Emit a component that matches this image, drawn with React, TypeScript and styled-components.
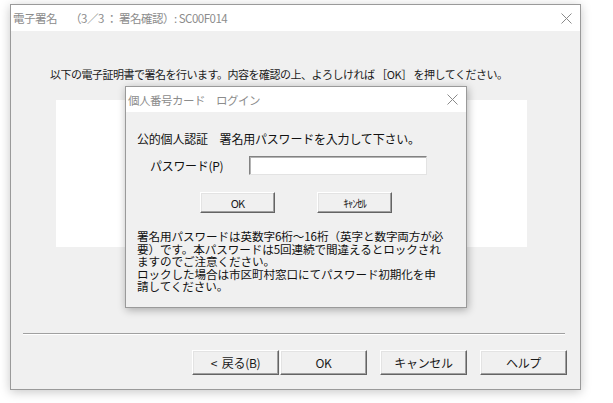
import React from "react";
import styled, { createGlobalStyle } from "styled-components";

const GlobalStyle = createGlobalStyle`
  html, body {
    margin: 0;
    padding: 0;
    background: #ffffff;
  }
  body {
    font-family: "Noto Sans CJK JP", "Noto Sans", sans-serif;
    width: 613px;
    height: 403px;
    overflow: hidden;
  }
`;

const Page = styled.div`
  padding: 4px 0 0 10px;
`;

const Window = styled.div`
  position: relative;
  width: 569px;
  height: 384px;
  border: 1px solid #9a9a9a;
  background: #f0f0f0;
  box-shadow: 0 2px 10px rgba(0, 0, 0, 0.22);
  display: flex;
  flex-direction: column;
`;

const TitleBar = styled.div<{ $h: number }>`
  height: ${(p) => p.$h}px;
  background: #ffffff;
  display: flex;
  align-items: center;
  justify-content: space-between;
  padding: 0 8px 0 2px;
  flex-shrink: 0;
`;

const TitleText = styled.span`
  font-size: 11.5px;
  color: #8c8c8c;
  white-space: pre;
  letter-spacing: -0.5px;
`;

const Body = styled.div`
  flex: 1;
  display: flex;
  flex-direction: column;
  padding: 36px 0 0 0;
`;

const Instruction = styled.div`
  font-size: 11px;
  color: #1a1a1a;
  padding-left: 39px;
  letter-spacing: -0.5px;
  white-space: nowrap;
  line-height: 14px;
`;

const WhitePanel = styled.div`
  margin: 19px 0 0 45px;
  width: 471px;
  height: 147px;
  background: #ffffff;
`;

const Separator = styled.div`
  margin: 86px 15px 0 12px;
  height: 0;
  border-top: 1px solid #a0a0a0;
  border-bottom: 1px solid #ffffff;
`;

const ButtonRow = styled.div`
  display: flex;
  justify-content: flex-end;
  padding: 15px 13px 0 0;
`;

const WinButton = styled.button<{ $w: number; $gap?: number; $size?: number }>`
  width: ${(p) => p.$w}px;
  height: 25px;
  margin-left: ${(p) => p.$gap ?? 0}px;
  background: #f0f0f0;
  border: 1px solid;
  border-color: #ffffff #646464 #646464 #ffffff;
  box-shadow: inset -1px -1px 0 #a0a0a0, inset 1px 1px 0 #e3e3e3;
  font-family: "Noto Sans CJK JP", "Noto Sans", sans-serif;
  font-size: ${(p) => p.$size ?? 12}px;
  color: #1a1a1a;
  padding: 0;
  display: flex;
  align-items: center;
  justify-content: center;
  letter-spacing: -0.3px;
  white-space: pre;
`;

const Dialog = styled.div`
  position: absolute;
  left: 114px;
  top: 81px;
  width: 340px;
  height: 220px;
  border: 1px solid #9a9a9a;
  background: #f0f0f0;
  box-shadow: 1px 2px 8px rgba(0, 0, 0, 0.3);
  display: flex;
  flex-direction: column;
`;

const DialogBody = styled.div`
  display: flex;
  flex-direction: column;
  padding: 20px 0 0 11px;
`;

const Prompt = styled.div`
  font-size: 12px;
  color: #111;
  line-height: 14px;
  white-space: nowrap;
  letter-spacing: -0.2px;
`;

const FieldRow = styled.div`
  display: flex;
  align-items: center;
  margin-top: 10px;
  padding-left: 13px;
`;

const FieldLabel = styled.span`
  font-size: 12px;
  color: #111;
  width: 99px;
  letter-spacing: -0.3px;
`;

const TextBox = styled.div`
  width: 176px;
  height: 17px;
  background: #fff;
  border: 1px solid;
  border-color: #828282 #e3e3e3 #e3e3e3 #828282;
  box-shadow: inset 1px 1px 0 #b4b4b4;
`;

const DialogButtons = styled.div`
  display: flex;
  padding-left: 63px;
  margin-top: 17px;
`;

const DialogButton = styled(WinButton)`
  height: 21px;
  font-size: 11px;
  letter-spacing: -1px;
`;

const Note = styled.p`
  margin: 17px 0 0 0;
  font-size: 11.6px;
  line-height: 12.6px;
  color: #111;
  letter-spacing: -0.1px;
  white-space: nowrap;
`;

function CloseIcon() {
  return (
    <svg width="11" height="11" viewBox="0 0 11 11">
      <path d="M0.5 0.5 L10.5 10.5 M10.5 0.5 L0.5 10.5" stroke="#8a8a8a" strokeWidth="1" fill="none" />
    </svg>
  );
}

const noteLines = [
  "署名用パスワードは英数字6桁～16桁（英字と数字両方が必",
  "要）です。本パスワードは5回連続で間違えるとロックされ",
  "ますのでご注意ください。",
  "ロックした場合は市区町村窓口にてパスワード初期化を申",
  "請してください。",
];

export default function App() {
  return (
    <>
      <GlobalStyle />
      <Page>
        <Window>
          <TitleBar $h={26}>
            <TitleText>{"電子署名　 （3／3 ： 署名確認）: SC00F014"}</TitleText>
            <CloseIcon />
          </TitleBar>
          <Body>
            <Instruction>
              以下の電子証明書で署名を行います。内容を確認の上、よろしければ ［OK］ を押してください。
            </Instruction>
            <WhitePanel />
            <Separator />
            <ButtonRow>
              <WinButton $w={87}>{"<  戻る(B)"}</WinButton>
              <WinButton $w={87} $gap={1}>OK</WinButton>
              <WinButton $w={87} $gap={13}>キャンセル</WinButton>
              <WinButton $w={87} $gap={13}>ヘルプ</WinButton>
            </ButtonRow>
          </Body>
          <Dialog>
            <TitleBar $h={25}>
              <TitleText>個人番号カード　ログイン</TitleText>
              <CloseIcon />
            </TitleBar>
            <DialogBody>
              <Prompt>公的個人認証　署名用パスワードを入力して下さい。</Prompt>
              <FieldRow>
                <FieldLabel>パスワード(P)</FieldLabel>
                <TextBox />
              </FieldRow>
              <DialogButtons>
                <DialogButton $w={75}>OK</DialogButton>
                <DialogButton $w={75} $gap={42}>ｷｬﾝｾﾙ</DialogButton>
              </DialogButtons>
              <Note>
                {noteLines.map((l, i) => (
                  <React.Fragment key={l}>
                    {i > 0 && <br />}
                    {l}
                  </React.Fragment>
                ))}
              </Note>
            </DialogBody>
          </Dialog>
        </Window>
      </Page>
    </>
  );
}
